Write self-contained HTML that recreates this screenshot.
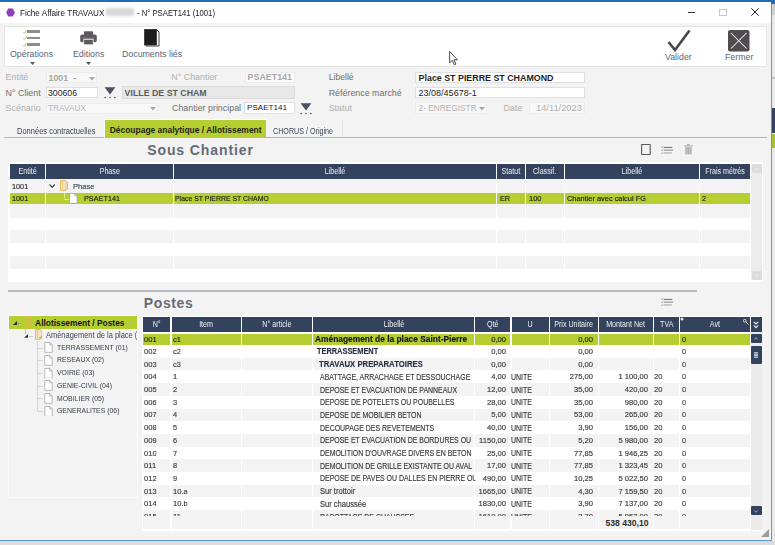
<!DOCTYPE html><html><head><meta charset="utf-8"><style>
*{margin:0;padding:0;box-sizing:border-box}
html,body{width:775px;height:545px;overflow:hidden;background:#dcdcdc;font-family:"Liberation Sans",sans-serif;}
.a{position:absolute;white-space:nowrap}
#win{position:absolute;left:0;top:0;width:772px;height:541px;background:#f3f3f3;overflow:hidden}
.lb{position:absolute;white-space:nowrap;font-size:8.9px;color:#707070;line-height:10px}
.dis{color:#b0b0b0}
.hd{position:absolute;background:#34435d;color:#eef0f4;font-size:8.3px;line-height:15px;text-align:center;white-space:nowrap;overflow:hidden}
.c{position:absolute;font-size:7px;color:#2a2a2a;-webkit-text-stroke:0.16px currentColor;white-space:nowrap;overflow:hidden}
</style></head><body><div id="win"><div class="a" style="left:0px;top:0px;width:772px;height:2px;background:#1f6bb8"></div>
<div class="a" style="left:0px;top:2px;width:771px;height:21px;background:#fff"></div>
<svg class="a" style="left:6px;top:8px" width="9" height="9" viewBox="0 0 9 9"><polygon points="2.2,0.5 6.8,0.5 8.8,4.5 6.8,8.5 2.2,8.5 0.2,4.5" fill="#8e3fc0"/></svg>
<div class="a" style="left:20px;top:7.6px;font-size:8.8px;color:#1a1a1a;line-height:10px;transform:scaleX(0.925);transform-origin:0 0">Fiche Affaire TRAVAUX</div>
<div class="a" style="left:106px;top:8px;width:28px;height:8px;background:#d8d8d8;filter:blur(1.5px)"></div>
<div class="a" style="left:136.5px;top:7.6px;font-size:8.8px;color:#1a1a1a;line-height:10px;transform:scaleX(0.875);transform-origin:0 0">- N° PSAET141 (1001)</div>
<div class="a" style="left:688px;top:12px;width:7px;height:1px;background:#333"></div>
<div class="a" style="left:719px;top:8.5px;width:8px;height:7px;border:1px solid #c8c8c8"></div>
<svg class="a" style="left:751px;top:8px" width="8" height="8" viewBox="0 0 8 8"><path d="M0.3 0.3L7.7 7.7M7.7 0.3L0.3 7.7" stroke="#222" stroke-width="1"/></svg>
<div class="a" style="left:4px;top:26px;width:763px;height:41px;background:#fff;border:1px solid #e6e6e6"></div>
<svg class="a" style="left:22.8px;top:29.7px" width="4" height="4" viewBox="0 0 4 4"><path d="M0.4 2.6L1.3 3.4L3.6 0.4" stroke="#8cc02a" stroke-width="0.9" fill="none"/></svg>
<div class="a" style="left:27px;top:30.2px;width:13px;height:2.6px;background:#8e8e8e"></div>
<svg class="a" style="left:22.8px;top:36.3px" width="4" height="4" viewBox="0 0 4 4"><path d="M0.4 2.6L1.3 3.4L3.6 0.4" stroke="#8cc02a" stroke-width="0.9" fill="none"/></svg>
<div class="a" style="left:27px;top:36.8px;width:13px;height:2.6px;background:#8e8e8e"></div>
<svg class="a" style="left:22.8px;top:42.7px" width="4" height="4" viewBox="0 0 4 4"><path d="M0.4 2.6L1.3 3.4L3.6 0.4" stroke="#8cc02a" stroke-width="0.9" fill="none"/></svg>
<div class="a" style="left:27px;top:43.2px;width:13px;height:2.6px;background:#8e8e8e"></div>
<div class="a" style="left:10px;top:50px;font-size:8.8px;color:#5a6478;line-height:10px;margin-top:-1px">Opérations</div>
<svg class="a" style="left:29.5px;top:61.5px" width="5" height="3" viewBox="0 0 5 3"><path d="M0 0H5L2.5 3Z" fill="#555"/></svg>
<svg class="a" style="left:80px;top:30.5px" width="17" height="14" viewBox="0 0 17 14">
<rect x="4" y="0.3" width="9" height="4" rx="0.8" fill="#5c5a5e"/>
<rect x="0.2" y="3.6" width="16.6" height="7.6" rx="1.8" fill="#5c5a5e"/>
<rect x="2.5" y="6.8" width="12" height="0.8" fill="#9a999c"/>
<rect x="3.8" y="8.6" width="9.4" height="5.2" fill="#5c5a5e" stroke="#fff" stroke-width="0.7"/>
</svg>
<div class="a" style="left:73px;top:50px;font-size:8.8px;color:#5a6478;line-height:10px;margin-top:-1px">Editions</div>
<svg class="a" style="left:86px;top:61.5px" width="5" height="3" viewBox="0 0 5 3"><path d="M0 0H5L2.5 3Z" fill="#555"/></svg>
<svg class="a" style="left:143px;top:29px" width="18" height="18" viewBox="0 0 18 18">
<path d="M3 1H14L16 3V17H3Z" fill="#fff" stroke="#444" stroke-width="1"/>
<rect x="1.5" y="0.5" width="12" height="15.5" fill="#1d1d1d" stroke="#333" stroke-width="0.8"/>
</svg>
<div class="a" style="left:122px;top:50px;font-size:8.8px;color:#5a6478;line-height:10px;margin-top:-1px">Documents liés</div>
<svg class="a" style="left:449px;top:51px" width="9.6" height="14.5" viewBox="0 0 9 14">
<path d="M0.5 0.5V11.5L3 9L5 13.3L6.6 12.6L4.6 8.5H8Z" fill="#fff" stroke="#3a3a44" stroke-width="0.9"/></svg>
<svg class="a" style="left:667px;top:29px" width="24" height="23" viewBox="0 0 24 23"><path d="M1.5 13L8 21L22.5 1.5" stroke="#4a474c" stroke-width="2.6" fill="none"/></svg>
<div class="a" style="left:665px;top:52px;font-size:8.8px;color:#5a6478;line-height:10px">Valider</div>
<svg class="a" style="left:728.3px;top:30px" width="22" height="22" viewBox="0 0 22 22">
<rect x="0" y="0" width="21.5" height="21.5" rx="2" fill="#524c50"/>
<path d="M3 3L18.5 18.5M18.5 3L3 18.5" stroke="#eeeeee" stroke-width="1.05"/></svg>
<div class="a" style="left:725px;top:52px;font-size:8.8px;color:#5a6478;line-height:10px">Fermer</div>
<div class="lb dis" style="left:5.6px;top:72.4px;font-size:8.9px">Entité</div>
<div class="a" style="left:46px;top:72px;width:51px;height:11px;background:#f8f8f8;border:1px solid #ececec"></div>
<div class="a" style="left:48.5px;top:72.6px;line-height:10px;font-size:8.9px;font-weight:bold;color:#a6a6a6">1001&nbsp; -</div>
<svg class="a" style="left:89px;top:76.5px" width="6" height="4" viewBox="0 0 6 4"><path d="M0 0H6L3 3.5Z" fill="#a8a8a8"/></svg>
<div class="lb" style="left:5.6px;top:87.5px;font-size:8.9px">N° Client</div>
<div class="a" style="left:45.5px;top:86.7px;width:52.0px;height:11.799999999999997px;background:#fff;border:1px solid #e0e0e0"></div>
<div class="a" style="left:48px;top:87.7px;line-height:10px;font-size:8.7px;color:#222">300606</div>
<svg class="a" style="left:103.6px;top:86.7px" width="13" height="12" viewBox="0 0 13 12">
<path d="M0.6 0.3H11.4L6 7.6Z" fill="#4b5167"/>
<circle cx="1.2" cy="10.6" r="0.75" fill="#3e4556"/><circle cx="6" cy="10.6" r="0.75" fill="#3e4556"/><circle cx="10.8" cy="10.6" r="0.75" fill="#3e4556"/></svg>
<div class="a" style="left:121.5px;top:86.3px;width:173.5px;height:12.400000000000006px;background:#e8e8e8;border:1px solid #dcdcdc"></div>
<div class="a" style="left:124.6px;top:87.6px;line-height:10px;font-size:8.8px;font-weight:bold;color:#5c5c5c">VILLE DE ST CHAM</div>
<div class="lb dis" style="left:5.6px;top:103px;font-size:8.9px">Scénario</div>
<div class="a" style="left:45.5px;top:103px;width:112.5px;height:10.5px;background:#f8f8f8;border:1px solid #ececec"></div>
<div class="a" style="left:48px;top:103.2px;line-height:10px;font-size:8.3px;color:#b4b4b4">TRAVAUX</div>
<svg class="a" style="left:150px;top:107px" width="6" height="4" viewBox="0 0 6 4"><path d="M0 0H6L3 3.5Z" fill="#a8a8a8"/></svg>
<div class="lb dis" style="left:171.3px;top:72px;font-size:8.9px">N° Chantier</div>
<div class="a" style="left:244.7px;top:71.6px;width:50.30000000000001px;height:11.400000000000006px;background:#fafafa;border:1px solid #ececec"></div>
<div class="a" style="left:247.6px;top:72.3px;line-height:10px;font-size:8.9px;font-weight:bold;color:#a8a8a8">PSAET141</div>
<div class="lb" style="left:172px;top:102.8px;font-size:8.9px">Chantier principal</div>
<div class="a" style="left:244.3px;top:102.3px;width:50.69999999999999px;height:12.0px;background:#fff;border:1px solid #e0e0e0"></div>
<div class="a" style="left:247px;top:103.3px;line-height:10px;font-size:8.1px;color:#222">PSAET141</div>
<svg class="a" style="left:300.3px;top:102.6px" width="13" height="12" viewBox="0 0 13 12">
<path d="M0.6 0.3H11.4L6 7.6Z" fill="#4b5167"/>
<circle cx="1.2" cy="10.6" r="0.75" fill="#3e4556"/><circle cx="6" cy="10.6" r="0.75" fill="#3e4556"/><circle cx="10.8" cy="10.6" r="0.75" fill="#3e4556"/></svg>
<div class="lb" style="left:328.7px;top:72.3px;font-size:8.65px">Libellé</div>
<div class="a" style="left:415.4px;top:71.9px;width:169.20000000000005px;height:11.5px;background:#fff;border:1px solid #e0e0e0"></div>
<div class="a" style="left:418.6px;top:72.7px;line-height:10px;font-size:8.87px;font-weight:bold;color:#1e1e1e">Place ST PIERRE ST CHAMOND</div>
<div class="lb" style="left:328.7px;top:87.6px;font-size:8.9px">Référence marché</div>
<div class="a" style="left:415.4px;top:86.7px;width:169.20000000000005px;height:11.700000000000003px;background:#fff;border:1px solid #e0e0e0"></div>
<div class="a" style="left:418.6px;top:87.8px;line-height:10px;font-size:9px;color:#222">23/08/45678-1</div>
<div class="lb dis" style="left:328.7px;top:103px;font-size:8.9px">Statut</div>
<div class="a" style="left:415.4px;top:102.4px;width:71.30000000000001px;height:11.699999999999989px;background:#f8f8f8;border:1px solid #ececec"></div>
<div class="a" style="left:418.6px;top:103.3px;line-height:10px;font-size:8.3px;color:#b0b0b0">2- ENREGISTR</div>
<svg class="a" style="left:478.5px;top:107px" width="6" height="4" viewBox="0 0 6 4"><path d="M0 0H6L3 3.5Z" fill="#a8a8a8"/></svg>
<div class="lb dis" style="left:503.4px;top:103px;font-size:8.9px">Date</div>
<div class="a" style="left:528.6px;top:102.4px;width:56.0px;height:11.699999999999989px;background:#f8f8f8;border:1px solid #ececec"></div>
<div class="a" style="left:536px;top:103.3px;line-height:10px;font-size:9.3px;color:#b0b0b0">14/11/2023</div>
<div class="a" style="left:4px;top:136.8px;width:100.5px;height:1.3px;background:#b6ce32"></div>
<div class="a" style="left:16.5px;top:125.8px;font-size:8.3px;color:#3c4458;line-height:10px;transform:scaleX(0.905);transform-origin:0 0">Données contractuelles</div>
<div class="a" style="left:104px;top:119px;width:161.5px;height:18.5px;background:#fff"></div>
<div class="a" style="left:105px;top:120px;width:160.5px;height:17.5px;background:#b6ce32"></div>
<div class="a" style="left:109.7px;top:124.5px;font-size:8.46px;font-weight:bold;color:#1d2418;line-height:10px">Découpage analytique / Allotissement</div>
<div class="a" style="left:265.5px;top:136.8px;width:501.5px;height:1.3px;background:#b6ce32"></div>
<div class="a" style="left:273px;top:125.8px;font-size:8.3px;color:#3c4458;line-height:10px;transform:scaleX(0.862);transform-origin:0 0">CHORUS / Origine</div>
<div class="a" style="left:342px;top:120px;width:1px;height:16px;background:#e4e4e4"></div>
<div class="a" style="left:147.2px;top:141.6px;font-size:14px;font-weight:bold;color:#676a75;line-height:16px;letter-spacing:0.9px">Sous Chantier</div>
<svg class="a" style="left:641px;top:144px" width="10" height="11" viewBox="0 0 10 11"><rect x="0.6" y="0.5" width="8.6" height="10" rx="0.6" fill="none" stroke="#5a5a5e" stroke-width="1.1"/></svg>
<svg class="a" style="left:661px;top:145.6px" width="12" height="8" viewBox="0 0 12 8">
<path d="M0.3 1.2L0.9 1.8L1.8 0.4M0.3 4.2L0.9 4.8L1.8 3.4M0.3 7.2L0.9 7.8L1.8 6.4" stroke="#6a6a6a" stroke-width="0.6" fill="none"/>
<rect x="2.8" y="0.9" width="8.5" height="1" fill="#6a6a6a"/><rect x="2.8" y="3.6" width="9.2" height="1" fill="#8a8a8a"/><rect x="2.8" y="6.5" width="8" height="0.9" fill="#9a9a9a"/></svg>
<svg class="a" style="left:683.5px;top:144px" width="9" height="11" viewBox="0 0 9 11">
<rect x="0" y="1.3" width="9" height="1.2" fill="#b5b5b5"/><rect x="3" y="0" width="3" height="1.5" fill="#b5b5b5"/>
<path d="M1 3H8V10.5H1Z" fill="#c4c4c4"/><path d="M3 4V9.5M4.5 4V9.5M6 4V9.5" stroke="#9e9e9e" stroke-width="0.5"/></svg>
<div class="a" style="left:8px;top:162px;width:755px;height:119.5px;background:#fff"></div>
<div class="hd" style="left:10px;top:163.8px;width:35.2px;height:15px"><span style="display:inline-block;transform:scaleX(0.86)">Entité</span></div>
<div class="hd" style="left:46px;top:163.8px;width:127.2px;height:15px"><span style="display:inline-block;transform:scaleX(0.86)">Phase</span></div>
<div class="hd" style="left:174px;top:163.8px;width:322.2px;height:15px"><span style="display:inline-block;transform:scaleX(0.86)">Libellé</span></div>
<div class="hd" style="left:497px;top:163.8px;width:28.2px;height:15px"><span style="display:inline-block;transform:scaleX(0.86)">Statut</span></div>
<div class="hd" style="left:526px;top:163.8px;width:38.2px;height:15px"><span style="display:inline-block;transform:scaleX(0.86)">Classif.</span></div>
<div class="hd" style="left:565px;top:163.8px;width:134.2px;height:15px"><span style="display:inline-block;transform:scaleX(0.86)">Libellé</span></div>
<div class="hd" style="left:700px;top:163.8px;width:50.2px;height:15px"><span style="display:inline-block;transform:scaleX(0.86)">Frais métrés</span></div>
<div class="a" style="left:10px;top:178.8px;width:35.2px;height:13.9px;background:#f3f3f3"></div>
<div class="a" style="left:46px;top:178.8px;width:127.2px;height:13.9px;background:#f3f3f3"></div>
<div class="a" style="left:174px;top:178.8px;width:322.2px;height:13.9px;background:#f3f3f3"></div>
<div class="a" style="left:497px;top:178.8px;width:28.2px;height:13.9px;background:#f3f3f3"></div>
<div class="a" style="left:526px;top:178.8px;width:38.2px;height:13.9px;background:#f3f3f3"></div>
<div class="a" style="left:565px;top:178.8px;width:134.2px;height:13.9px;background:#f3f3f3"></div>
<div class="a" style="left:700px;top:178.8px;width:50.2px;height:13.9px;background:#f3f3f3"></div>
<div class="a" style="left:10px;top:192.7px;width:35.2px;height:11.7px;background:#b6ce32"></div>
<div class="a" style="left:46px;top:192.7px;width:127.2px;height:11.7px;background:#b6ce32"></div>
<div class="a" style="left:174px;top:192.7px;width:322.2px;height:11.7px;background:#b6ce32"></div>
<div class="a" style="left:497px;top:192.7px;width:28.2px;height:11.7px;background:#b6ce32"></div>
<div class="a" style="left:526px;top:192.7px;width:38.2px;height:11.7px;background:#b6ce32"></div>
<div class="a" style="left:565px;top:192.7px;width:134.2px;height:11.7px;background:#b6ce32"></div>
<div class="a" style="left:700px;top:192.7px;width:50.2px;height:11.7px;background:#b6ce32"></div>
<div class="a" style="left:10px;top:204.4px;width:35.2px;height:13.2px;background:#f3f3f3"></div>
<div class="a" style="left:46px;top:204.4px;width:127.2px;height:13.2px;background:#f3f3f3"></div>
<div class="a" style="left:174px;top:204.4px;width:322.2px;height:13.2px;background:#f3f3f3"></div>
<div class="a" style="left:497px;top:204.4px;width:28.2px;height:13.2px;background:#f3f3f3"></div>
<div class="a" style="left:526px;top:204.4px;width:38.2px;height:13.2px;background:#f3f3f3"></div>
<div class="a" style="left:565px;top:204.4px;width:134.2px;height:13.2px;background:#f3f3f3"></div>
<div class="a" style="left:700px;top:204.4px;width:50.2px;height:13.2px;background:#f3f3f3"></div>
<div class="a" style="left:10px;top:230.2px;width:35.2px;height:12.8px;background:#f3f3f3"></div>
<div class="a" style="left:46px;top:230.2px;width:127.2px;height:12.8px;background:#f3f3f3"></div>
<div class="a" style="left:174px;top:230.2px;width:322.2px;height:12.8px;background:#f3f3f3"></div>
<div class="a" style="left:497px;top:230.2px;width:28.2px;height:12.8px;background:#f3f3f3"></div>
<div class="a" style="left:526px;top:230.2px;width:38.2px;height:12.8px;background:#f3f3f3"></div>
<div class="a" style="left:565px;top:230.2px;width:134.2px;height:12.8px;background:#f3f3f3"></div>
<div class="a" style="left:700px;top:230.2px;width:50.2px;height:12.8px;background:#f3f3f3"></div>
<div class="a" style="left:10px;top:255.8px;width:35.2px;height:12.8px;background:#f3f3f3"></div>
<div class="a" style="left:46px;top:255.8px;width:127.2px;height:12.8px;background:#f3f3f3"></div>
<div class="a" style="left:174px;top:255.8px;width:322.2px;height:12.8px;background:#f3f3f3"></div>
<div class="a" style="left:497px;top:255.8px;width:28.2px;height:12.8px;background:#f3f3f3"></div>
<div class="a" style="left:526px;top:255.8px;width:38.2px;height:12.8px;background:#f3f3f3"></div>
<div class="a" style="left:565px;top:255.8px;width:134.2px;height:12.8px;background:#f3f3f3"></div>
<div class="a" style="left:700px;top:255.8px;width:50.2px;height:12.8px;background:#f3f3f3"></div>
<div class="c" style="left:11.7px;top:180.79999999999998px;line-height:12px;font-size:7.9px;transform:scaleX(0.924);transform-origin:0 50%;">1001</div>
<svg class="a" style="left:48.8px;top:183.6px" width="6.4" height="4" viewBox="0 0 6.4 4"><path d="M0.5 0.5L3.2 3.3L5.9 0.5" stroke="#3a3a3a" stroke-width="1.1" fill="none"/></svg>
<svg class="a" style="left:59.7px;top:180.3px" width="8" height="10.8" viewBox="0 0 8 10.8">
<path d="M0.6 0.6H5.5L7.4 2.2V9.2H5.8V10.3H0.6Z" fill="#f3e4cc" stroke="#e6b43c" stroke-width="0.9"/>
<path d="M2.6 1.5V9.4M5.8 2.5V9.2" stroke="#e0ba60" stroke-width="0.6" fill="none"/></svg>
<div class="c" style="left:72.7px;top:180.79999999999998px;line-height:12px;font-size:7.9px;transform:scaleX(0.962);transform-origin:0 50%;color:#3c4458">Phase</div>
<div class="a" style="left:63.8px;top:192.7px;width:0.7px;height:5.5px;background:#dfe9a8"></div>
<div class="a" style="left:63.8px;top:198.6px;width:5px;height:0.7px;background:#dfe9a8"></div>
<svg class="a" style="left:69px;top:193px" width="8.8" height="11" viewBox="0 0 8.5 11">
<path d="M0.5 0.5H5.5L8 3V10.5H0.5Z" fill="#fff" stroke="#9a9a9a" stroke-width="0.7"/><path d="M5.5 0.5V3H8" fill="none" stroke="#9a9a9a" stroke-width="0.6"/></svg>
<div class="c" style="left:11.7px;top:193.1px;line-height:12px;font-size:7.9px;transform:scaleX(0.924);transform-origin:0 50%;color:#1e1e1e">1001</div>
<div class="c" style="left:83.7px;top:193.1px;line-height:12px;font-size:7.9px;transform:scaleX(0.924);transform-origin:0 50%;color:#1e1e1e">PSAET141</div>
<div class="c" style="left:175.1px;top:193.1px;line-height:12px;font-size:7.9px;transform:scaleX(0.876);transform-origin:0 50%;color:#1e1e1e">Place ST PIERRE ST CHAMO</div>
<div class="c" style="left:499.5px;top:193.1px;line-height:12px;font-size:7.9px;transform:scaleX(0.924);transform-origin:0 50%;color:#1e1e1e">ER</div>
<div class="c" style="left:528.5px;top:193.1px;line-height:12px;font-size:7.9px;transform:scaleX(0.949);transform-origin:0 50%;color:#1e1e1e">100</div>
<div class="c" style="left:566.8px;top:193.1px;line-height:12px;font-size:7.9px;transform:scaleX(0.937);transform-origin:0 50%;color:#1e1e1e">Chantier avec calcul FG</div>
<div class="c" style="left:702px;top:193.1px;line-height:12px;font-size:7.9px;transform:scaleX(0.949);transform-origin:0 50%;color:#1e1e1e">2</div>
<div class="a" style="left:751px;top:163.5px;width:11px;height:116.5px;background:#ececec"></div>
<div class="a" style="left:751.5px;top:163.6px;width:10px;height:9.8px;background:#dcdcdc;border-radius:1.5px"></div>
<div class="a" style="left:751.5px;top:270.5px;width:10px;height:9.3px;background:#dcdcdc;border-radius:1.5px"></div>
<svg class="a" style="left:754.5px;top:166.8px" width="4" height="3" viewBox="0 0 4 3"><path d="M0.3 2.5L2 0.7L3.7 2.5" stroke="#f4f4f4" stroke-width="0.7" fill="none"/></svg>
<svg class="a" style="left:754.5px;top:274px" width="4" height="3" viewBox="0 0 4 3"><path d="M0.3 0.5L2 2.3L3.7 0.5" stroke="#f4f4f4" stroke-width="0.7" fill="none"/></svg>
<div class="a" style="left:8px;top:290px;width:688.5px;height:2px;background:#b9bcc2"></div>
<div class="a" style="left:143.8px;top:295px;font-size:14px;font-weight:bold;color:#676a75;line-height:16px;letter-spacing:0.6px">Postes</div>
<svg class="a" style="left:661px;top:298px" width="12" height="8" viewBox="0 0 12 8">
<path d="M0.3 1.2L0.9 1.8L1.8 0.4M0.3 4.2L0.9 4.8L1.8 3.4M0.3 7.2L0.9 7.8L1.8 6.4" stroke="#6a6a6a" stroke-width="0.6" fill="none"/>
<rect x="2.8" y="0.9" width="8.5" height="1" fill="#6a6a6a"/><rect x="2.8" y="3.6" width="9.2" height="1" fill="#8a8a8a"/><rect x="2.8" y="6.5" width="8" height="0.9" fill="#9a9a9a"/></svg>
<div class="a" style="left:8px;top:315px;width:130px;height:183px;background:#f3f3f3;border:1.5px solid #fbfbfb"></div>
<div class="a" style="left:9px;top:316px;width:128px;height:12.5px;background:#b6ce32"></div>
<svg class="a" style="left:12.8px;top:321px" width="4" height="4" viewBox="0 0 4 4"><path d="M4 0V4H0Z" fill="#2a2a3a"/></svg>
<div class="a" style="left:17px;top:322.8px;width:4px;height:0.6px;background:#9aaa50"></div>
<svg class="a" style="left:23px;top:316.3px" width="8" height="11.5" viewBox="0 0 8 11.5">
<path d="M0.5 1.5L3 0.4H7.5V10.5H0.5Z" fill="none" stroke="#e3b650" stroke-width="0.9"/>
<path d="M2.5 3V9.5" stroke="#e3b650" stroke-width="0.7"/></svg>
<div class="a" style="left:35.1px;top:317.6px;font-size:8.4px;font-weight:bold;color:#141414;line-height:10px">Allotissement / Postes</div>
<div class="a" style="left:25.3px;top:328.5px;width:0.7px;height:5.5px;background:#b8b8b8"></div>
<svg class="a" style="left:24px;top:333.8px" width="4.2" height="3.8" viewBox="0 0 4 4"><path d="M4 0V4H0Z" fill="#2a2a3a"/></svg>
<div class="a" style="left:28.5px;top:335.5px;width:4.5px;height:0.6px;background:#c8c8c8"></div>
<svg class="a" style="left:34.7px;top:329px" width="7.5" height="11" viewBox="0 0 7.5 11">
<path d="M0.6 0.6H5L6.9 2.2V9.2H5.4V10.3H0.6Z" fill="#f3e4cc" stroke="#e6b43c" stroke-width="0.9"/><path d="M2.4 1.5V9.4" stroke="#e0ba60" stroke-width="0.6"/><path d="M4.3 8L5.3 9L7.2 6.6" stroke="#7cb82a" stroke-width="0.9" fill="none"/></svg>
<div class="a" style="left:46.4px;top:330.2px;width:90.6px;height:11px;overflow:hidden"><div class="a" style="left:0;top:0;font-size:8.3px;color:#3c4458;line-height:10px;transform:scaleX(0.9);transform-origin:0 0">Aménagement de la place (</div></div>
<div class="a" style="left:37px;top:340.5px;width:0.7px;height:70px;background:#d4d4d4"></div>
<div class="a" style="left:37.8px;top:347.6px;width:5px;height:0.6px;background:#d4d4d4"></div>
<svg class="a" style="left:44px;top:342.20000000000005px" width="9" height="10.8" viewBox="0 0 8.5 11">
<path d="M0.5 0.5H5.5L8 3V10.5H0.5Z" fill="#fff" stroke="#9a9a9a" stroke-width="0.7"/><path d="M5.5 0.5V3H8" fill="none" stroke="#9a9a9a" stroke-width="0.6"/></svg>
<div class="a" style="left:56.9px;top:342.8px;font-size:7.8px;color:#353a48;line-height:10px;transform:scaleX(0.885);transform-origin:0 0">TERRASSEMENT (01)</div>
<div class="a" style="left:37.8px;top:360.28000000000003px;width:5px;height:0.6px;background:#d4d4d4"></div>
<svg class="a" style="left:44px;top:354.88000000000005px" width="9" height="10.8" viewBox="0 0 8.5 11">
<path d="M0.5 0.5H5.5L8 3V10.5H0.5Z" fill="#fff" stroke="#9a9a9a" stroke-width="0.7"/><path d="M5.5 0.5V3H8" fill="none" stroke="#9a9a9a" stroke-width="0.6"/></svg>
<div class="a" style="left:56.9px;top:355.48px;font-size:7.8px;color:#353a48;line-height:10px;transform:scaleX(0.885);transform-origin:0 0">RESEAUX (02)</div>
<div class="a" style="left:37.8px;top:372.96000000000004px;width:5px;height:0.6px;background:#d4d4d4"></div>
<svg class="a" style="left:44px;top:367.56000000000006px" width="9" height="10.8" viewBox="0 0 8.5 11">
<path d="M0.5 0.5H5.5L8 3V10.5H0.5Z" fill="#fff" stroke="#9a9a9a" stroke-width="0.7"/><path d="M5.5 0.5V3H8" fill="none" stroke="#9a9a9a" stroke-width="0.6"/></svg>
<div class="a" style="left:56.9px;top:368.16px;font-size:7.8px;color:#353a48;line-height:10px;transform:scaleX(0.885);transform-origin:0 0">VOIRIE (03)</div>
<div class="a" style="left:37.8px;top:385.64000000000004px;width:5px;height:0.6px;background:#d4d4d4"></div>
<svg class="a" style="left:44px;top:380.24000000000007px" width="9" height="10.8" viewBox="0 0 8.5 11">
<path d="M0.5 0.5H5.5L8 3V10.5H0.5Z" fill="#fff" stroke="#9a9a9a" stroke-width="0.7"/><path d="M5.5 0.5V3H8" fill="none" stroke="#9a9a9a" stroke-width="0.6"/></svg>
<div class="a" style="left:56.9px;top:380.84000000000003px;font-size:7.8px;color:#353a48;line-height:10px;transform:scaleX(0.885);transform-origin:0 0">GENIE-CIVIL (04)</div>
<div class="a" style="left:37.8px;top:398.32000000000005px;width:5px;height:0.6px;background:#d4d4d4"></div>
<svg class="a" style="left:44px;top:392.9200000000001px" width="9" height="10.8" viewBox="0 0 8.5 11">
<path d="M0.5 0.5H5.5L8 3V10.5H0.5Z" fill="#fff" stroke="#9a9a9a" stroke-width="0.7"/><path d="M5.5 0.5V3H8" fill="none" stroke="#9a9a9a" stroke-width="0.6"/></svg>
<div class="a" style="left:56.9px;top:393.52000000000004px;font-size:7.8px;color:#353a48;line-height:10px;transform:scaleX(0.885);transform-origin:0 0">MOBILIER (05)</div>
<div class="a" style="left:37.8px;top:411.0px;width:5px;height:0.6px;background:#d4d4d4"></div>
<svg class="a" style="left:44px;top:405.6px" width="9" height="10.8" viewBox="0 0 8.5 11">
<path d="M0.5 0.5H5.5L8 3V10.5H0.5Z" fill="#fff" stroke="#9a9a9a" stroke-width="0.7"/><path d="M5.5 0.5V3H8" fill="none" stroke="#9a9a9a" stroke-width="0.6"/></svg>
<div class="a" style="left:56.9px;top:406.2px;font-size:7.8px;color:#353a48;line-height:10px;transform:scaleX(0.885);transform-origin:0 0">GENERALITES (06)</div>
<div class="a" style="left:142px;top:315.5px;width:620px;height:215px;background:#fff"></div>
<div class="hd" style="left:143px;top:316.9px;width:27.3px;height:15.1px;line-height:15px"><span style="display:inline-block;transform:scaleX(0.86)">N°</span></div>
<div class="hd" style="left:171.8px;top:316.9px;width:68.8px;height:15.1px;line-height:15px"><span style="display:inline-block;transform:scaleX(0.86)">Item</span></div>
<div class="hd" style="left:242px;top:316.9px;width:70.2px;height:15.1px;line-height:15px"><span style="display:inline-block;transform:scaleX(0.86)">N° article</span></div>
<div class="hd" style="left:313.4px;top:316.9px;width:160.6px;height:15.1px;line-height:15px"><span style="display:inline-block;transform:scaleX(0.86)">Libellé</span></div>
<div class="hd" style="left:475.2px;top:316.9px;width:35.1px;height:15.1px;line-height:15px"><span style="display:inline-block;transform:scaleX(0.86)">Qté</span></div>
<div class="hd" style="left:511.5px;top:316.9px;width:37.5px;height:15.1px;line-height:15px"><span style="display:inline-block;transform:scaleX(0.86)">U</span></div>
<div class="hd" style="left:550.2px;top:316.9px;width:47.8px;height:15.1px;line-height:15px"><span style="display:inline-block;transform:scaleX(0.86)">Prix Unitaire</span></div>
<div class="hd" style="left:599.2px;top:316.9px;width:53.6px;height:15.1px;line-height:15px"><span style="display:inline-block;transform:scaleX(0.86)">Montant Net</span></div>
<div class="hd" style="left:654px;top:316.9px;width:24.6px;height:15.1px;line-height:15px"><span style="display:inline-block;transform:scaleX(0.86)">TVA</span></div>
<div class="hd" style="left:679.8px;top:316.9px;width:70.2px;height:15.1px;line-height:15px"><span style="display:inline-block;transform:scaleX(0.86)">Avt</span></div>
<svg class="a" style="left:680px;top:317px" width="4" height="4" viewBox="0 0 4 4"><circle cx="2" cy="2" r="1.5" fill="#e8e8e8"/></svg>
<svg class="a" style="left:743px;top:319px" width="6" height="6" viewBox="0 0 6 6"><circle cx="1.8" cy="1.8" r="1.4" fill="none" stroke="#e0e0e0" stroke-width="0.9"/><path d="M2.8 2.8L5.6 5.6" stroke="#e0e0e0" stroke-width="1"/></svg>
<div class="a" style="left:142px;top:333px;width:610px;height:183px;overflow:hidden">
<div class="a" style="left:1px;top:0.5px;width:27.3px;height:11.5px;background:#b6ce32"></div>
<div class="a" style="left:29.8px;top:0.5px;width:68.8px;height:11.5px;background:#b6ce32"></div>
<div class="a" style="left:100px;top:0.5px;width:70.2px;height:11.5px;background:#b6ce32"></div>
<div class="a" style="left:171.4px;top:0.5px;width:160.6px;height:11.5px;background:#b6ce32"></div>
<div class="a" style="left:333.2px;top:0.5px;width:35.1px;height:11.5px;background:#b6ce32"></div>
<div class="a" style="left:369.5px;top:0.5px;width:37.5px;height:11.5px;background:#b6ce32"></div>
<div class="a" style="left:408.2px;top:0.5px;width:47.8px;height:11.5px;background:#b6ce32"></div>
<div class="a" style="left:457.2px;top:0.5px;width:53.6px;height:11.5px;background:#b6ce32"></div>
<div class="a" style="left:512px;top:0.5px;width:24.6px;height:11.5px;background:#b6ce32"></div>
<div class="a" style="left:537.8px;top:0.5px;width:70.2px;height:11.5px;background:#b6ce32"></div>
<div class="c" style="left:2.2px;top:0.85px;line-height:12px;color:#1a1a1a;font-size:7.9px;transform:scaleX(0.962);transform-origin:0 50%;">001</div>
<div class="c" style="left:31.4px;top:0.85px;line-height:12px;color:#1a1a1a;font-size:7.9px;transform:scaleX(0.962);transform-origin:0 50%;">c1</div>
<div class="c" style="left:172.7px;top:0.05px;line-height:12px;color:#1a1a1a;font-size:8.9px;transform:scaleX(0.944);transform-origin:0 50%;font-weight:bold;width:190px;color:#151515">Aménagement de la place Saint-Pierre</div>
<div class="c" style="left:263.5px;width:100px;text-align:right;top:0.85px;line-height:12px;color:#1a1a1a;font-size:7.9px;transform:scaleX(0.962);transform-origin:100% 50%;">0,00</div>
<div class="c" style="left:369.2px;top:0.37px;line-height:12px;color:#1a1a1a;font-size:8.5px;transform:scaleX(0.824);transform-origin:0 50%;"></div>
<div class="c" style="left:351.2px;width:100px;text-align:right;top:0.85px;line-height:12px;color:#1a1a1a;font-size:7.9px;transform:scaleX(0.962);transform-origin:100% 50%;">0,00</div>
<div class="c" style="left:406.3px;width:100px;text-align:right;top:0.85px;line-height:12px;color:#1a1a1a;font-size:7.9px;transform:scaleX(0.962);transform-origin:100% 50%;"></div>
<div class="c" style="left:512.3px;top:0.85px;line-height:12px;color:#1a1a1a;font-size:7.9px;transform:scaleX(0.962);transform-origin:0 50%;"></div>
<div class="c" style="left:539.8px;top:0.85px;line-height:12px;color:#1a1a1a;font-size:7.9px;transform:scaleX(0.962);transform-origin:0 50%;">0</div>
<div class="c" style="left:2.2px;top:12.95px;line-height:12px;color:#3a3a3a;font-size:7.9px;transform:scaleX(0.962);transform-origin:0 50%;">002</div>
<div class="c" style="left:31.4px;top:12.95px;line-height:12px;color:#3a3a3a;font-size:7.9px;transform:scaleX(0.962);transform-origin:0 50%;">c2</div>
<div class="c" style="left:174.8px;top:12.39px;line-height:12px;color:#3a3a3a;font-size:8.6px;transform:scaleX(0.86);transform-origin:0 50%;font-weight:bold;color:#283044">TERRASSEMENT</div>
<div class="c" style="left:263.5px;width:100px;text-align:right;top:12.95px;line-height:12px;color:#3a3a3a;font-size:7.9px;transform:scaleX(0.962);transform-origin:100% 50%;">0,00</div>
<div class="c" style="left:369.2px;top:12.47px;line-height:12px;color:#3a3a3a;font-size:8.5px;transform:scaleX(0.824);transform-origin:0 50%;"></div>
<div class="c" style="left:351.2px;width:100px;text-align:right;top:12.95px;line-height:12px;color:#3a3a3a;font-size:7.9px;transform:scaleX(0.962);transform-origin:100% 50%;">0,00</div>
<div class="c" style="left:406.3px;width:100px;text-align:right;top:12.95px;line-height:12px;color:#3a3a3a;font-size:7.9px;transform:scaleX(0.962);transform-origin:100% 50%;"></div>
<div class="c" style="left:512.3px;top:12.95px;line-height:12px;color:#3a3a3a;font-size:7.9px;transform:scaleX(0.962);transform-origin:0 50%;"></div>
<div class="c" style="left:539.8px;top:12.95px;line-height:12px;color:#3a3a3a;font-size:7.9px;transform:scaleX(0.962);transform-origin:0 50%;">0</div>
<div class="a" style="left:1px;top:24.7px;width:27.3px;height:12.7px;background:#f3f3f3"></div>
<div class="a" style="left:29.8px;top:24.7px;width:68.8px;height:12.7px;background:#f3f3f3"></div>
<div class="a" style="left:100px;top:24.7px;width:70.2px;height:12.7px;background:#f3f3f3"></div>
<div class="a" style="left:171.4px;top:24.7px;width:160.6px;height:12.7px;background:#f3f3f3"></div>
<div class="a" style="left:333.2px;top:24.7px;width:35.1px;height:12.7px;background:#f3f3f3"></div>
<div class="a" style="left:369.5px;top:24.7px;width:37.5px;height:12.7px;background:#f3f3f3"></div>
<div class="a" style="left:408.2px;top:24.7px;width:47.8px;height:12.7px;background:#f3f3f3"></div>
<div class="a" style="left:457.2px;top:24.7px;width:53.6px;height:12.7px;background:#f3f3f3"></div>
<div class="a" style="left:512px;top:24.7px;width:24.6px;height:12.7px;background:#f3f3f3"></div>
<div class="a" style="left:537.8px;top:24.7px;width:70.2px;height:12.7px;background:#f3f3f3"></div>
<div class="c" style="left:2.2px;top:25.65px;line-height:12px;color:#3a3a3a;font-size:7.9px;transform:scaleX(0.962);transform-origin:0 50%;">003</div>
<div class="c" style="left:31.4px;top:25.65px;line-height:12px;color:#3a3a3a;font-size:7.9px;transform:scaleX(0.962);transform-origin:0 50%;">c3</div>
<div class="c" style="left:177.2px;top:25.09px;line-height:12px;color:#3a3a3a;font-size:8.6px;transform:scaleX(0.901);transform-origin:0 50%;font-weight:bold;color:#283044">TRAVAUX PREPARATOIRES</div>
<div class="c" style="left:263.5px;width:100px;text-align:right;top:25.65px;line-height:12px;color:#3a3a3a;font-size:7.9px;transform:scaleX(0.962);transform-origin:100% 50%;">0,00</div>
<div class="c" style="left:369.2px;top:25.17px;line-height:12px;color:#3a3a3a;font-size:8.5px;transform:scaleX(0.824);transform-origin:0 50%;"></div>
<div class="c" style="left:351.2px;width:100px;text-align:right;top:25.65px;line-height:12px;color:#3a3a3a;font-size:7.9px;transform:scaleX(0.962);transform-origin:100% 50%;">0,00</div>
<div class="c" style="left:406.3px;width:100px;text-align:right;top:25.65px;line-height:12px;color:#3a3a3a;font-size:7.9px;transform:scaleX(0.962);transform-origin:100% 50%;"></div>
<div class="c" style="left:512.3px;top:25.65px;line-height:12px;color:#3a3a3a;font-size:7.9px;transform:scaleX(0.962);transform-origin:0 50%;"></div>
<div class="c" style="left:539.8px;top:25.65px;line-height:12px;color:#3a3a3a;font-size:7.9px;transform:scaleX(0.962);transform-origin:0 50%;">0</div>
<div class="c" style="left:2.2px;top:38.35px;line-height:12px;color:#3a3a3a;font-size:7.9px;transform:scaleX(0.962);transform-origin:0 50%;">004</div>
<div class="c" style="left:31.4px;top:38.35px;line-height:12px;color:#3a3a3a;font-size:7.9px;transform:scaleX(0.962);transform-origin:0 50%;">1</div>
<div class="c" style="left:178.2px;top:37.87px;line-height:12px;color:#3a3a3a;font-size:8.5px;transform:scaleX(0.818);transform-origin:0 50%;width:190px">ABATTAGE, ARRACHAGE ET DESSOUCHAGE</div>
<div class="c" style="left:263.5px;width:100px;text-align:right;top:38.35px;line-height:12px;color:#3a3a3a;font-size:7.9px;transform:scaleX(0.962);transform-origin:100% 50%;">4,00</div>
<div class="c" style="left:369.2px;top:37.87px;line-height:12px;color:#3a3a3a;font-size:8.5px;transform:scaleX(0.824);transform-origin:0 50%;">UNITE</div>
<div class="c" style="left:351.2px;width:100px;text-align:right;top:38.35px;line-height:12px;color:#3a3a3a;font-size:7.9px;transform:scaleX(0.962);transform-origin:100% 50%;">275,00</div>
<div class="c" style="left:406.3px;width:100px;text-align:right;top:38.35px;line-height:12px;color:#3a3a3a;font-size:7.9px;transform:scaleX(0.962);transform-origin:100% 50%;">1 100,00</div>
<div class="c" style="left:512.3px;top:38.35px;line-height:12px;color:#3a3a3a;font-size:7.9px;transform:scaleX(0.962);transform-origin:0 50%;">20</div>
<div class="c" style="left:539.8px;top:38.35px;line-height:12px;color:#3a3a3a;font-size:7.9px;transform:scaleX(0.962);transform-origin:0 50%;">0</div>
<div class="a" style="left:1px;top:50.1px;width:27.3px;height:12.7px;background:#f3f3f3"></div>
<div class="a" style="left:29.8px;top:50.1px;width:68.8px;height:12.7px;background:#f3f3f3"></div>
<div class="a" style="left:100px;top:50.1px;width:70.2px;height:12.7px;background:#f3f3f3"></div>
<div class="a" style="left:171.4px;top:50.1px;width:160.6px;height:12.7px;background:#f3f3f3"></div>
<div class="a" style="left:333.2px;top:50.1px;width:35.1px;height:12.7px;background:#f3f3f3"></div>
<div class="a" style="left:369.5px;top:50.1px;width:37.5px;height:12.7px;background:#f3f3f3"></div>
<div class="a" style="left:408.2px;top:50.1px;width:47.8px;height:12.7px;background:#f3f3f3"></div>
<div class="a" style="left:457.2px;top:50.1px;width:53.6px;height:12.7px;background:#f3f3f3"></div>
<div class="a" style="left:512px;top:50.1px;width:24.6px;height:12.7px;background:#f3f3f3"></div>
<div class="a" style="left:537.8px;top:50.1px;width:70.2px;height:12.7px;background:#f3f3f3"></div>
<div class="c" style="left:2.2px;top:51.05px;line-height:12px;color:#3a3a3a;font-size:7.9px;transform:scaleX(0.962);transform-origin:0 50%;">005</div>
<div class="c" style="left:31.4px;top:51.05px;line-height:12px;color:#3a3a3a;font-size:7.9px;transform:scaleX(0.962);transform-origin:0 50%;">2</div>
<div class="c" style="left:178.2px;top:50.57px;line-height:12px;color:#3a3a3a;font-size:8.5px;transform:scaleX(0.818);transform-origin:0 50%;width:190px">DEPOSE ET EVACUATION DE PANNEAUX</div>
<div class="c" style="left:263.5px;width:100px;text-align:right;top:51.05px;line-height:12px;color:#3a3a3a;font-size:7.9px;transform:scaleX(0.962);transform-origin:100% 50%;">12,00</div>
<div class="c" style="left:369.2px;top:50.57px;line-height:12px;color:#3a3a3a;font-size:8.5px;transform:scaleX(0.824);transform-origin:0 50%;">UNITE</div>
<div class="c" style="left:351.2px;width:100px;text-align:right;top:51.05px;line-height:12px;color:#3a3a3a;font-size:7.9px;transform:scaleX(0.962);transform-origin:100% 50%;">35,00</div>
<div class="c" style="left:406.3px;width:100px;text-align:right;top:51.05px;line-height:12px;color:#3a3a3a;font-size:7.9px;transform:scaleX(0.962);transform-origin:100% 50%;">420,00</div>
<div class="c" style="left:512.3px;top:51.05px;line-height:12px;color:#3a3a3a;font-size:7.9px;transform:scaleX(0.962);transform-origin:0 50%;">20</div>
<div class="c" style="left:539.8px;top:51.05px;line-height:12px;color:#3a3a3a;font-size:7.9px;transform:scaleX(0.962);transform-origin:0 50%;">0</div>
<div class="c" style="left:2.2px;top:63.75px;line-height:12px;color:#3a3a3a;font-size:7.9px;transform:scaleX(0.962);transform-origin:0 50%;">006</div>
<div class="c" style="left:31.4px;top:63.75px;line-height:12px;color:#3a3a3a;font-size:7.9px;transform:scaleX(0.962);transform-origin:0 50%;">3</div>
<div class="c" style="left:178.2px;top:63.27px;line-height:12px;color:#3a3a3a;font-size:8.5px;transform:scaleX(0.818);transform-origin:0 50%;width:190px">DEPOSE DE POTELETS OU POUBELLES</div>
<div class="c" style="left:263.5px;width:100px;text-align:right;top:63.75px;line-height:12px;color:#3a3a3a;font-size:7.9px;transform:scaleX(0.962);transform-origin:100% 50%;">28,00</div>
<div class="c" style="left:369.2px;top:63.27px;line-height:12px;color:#3a3a3a;font-size:8.5px;transform:scaleX(0.824);transform-origin:0 50%;">UNITE</div>
<div class="c" style="left:351.2px;width:100px;text-align:right;top:63.75px;line-height:12px;color:#3a3a3a;font-size:7.9px;transform:scaleX(0.962);transform-origin:100% 50%;">35,00</div>
<div class="c" style="left:406.3px;width:100px;text-align:right;top:63.75px;line-height:12px;color:#3a3a3a;font-size:7.9px;transform:scaleX(0.962);transform-origin:100% 50%;">980,00</div>
<div class="c" style="left:512.3px;top:63.75px;line-height:12px;color:#3a3a3a;font-size:7.9px;transform:scaleX(0.962);transform-origin:0 50%;">20</div>
<div class="c" style="left:539.8px;top:63.75px;line-height:12px;color:#3a3a3a;font-size:7.9px;transform:scaleX(0.962);transform-origin:0 50%;">0</div>
<div class="a" style="left:1px;top:75.5px;width:27.3px;height:12.7px;background:#f3f3f3"></div>
<div class="a" style="left:29.8px;top:75.5px;width:68.8px;height:12.7px;background:#f3f3f3"></div>
<div class="a" style="left:100px;top:75.5px;width:70.2px;height:12.7px;background:#f3f3f3"></div>
<div class="a" style="left:171.4px;top:75.5px;width:160.6px;height:12.7px;background:#f3f3f3"></div>
<div class="a" style="left:333.2px;top:75.5px;width:35.1px;height:12.7px;background:#f3f3f3"></div>
<div class="a" style="left:369.5px;top:75.5px;width:37.5px;height:12.7px;background:#f3f3f3"></div>
<div class="a" style="left:408.2px;top:75.5px;width:47.8px;height:12.7px;background:#f3f3f3"></div>
<div class="a" style="left:457.2px;top:75.5px;width:53.6px;height:12.7px;background:#f3f3f3"></div>
<div class="a" style="left:512px;top:75.5px;width:24.6px;height:12.7px;background:#f3f3f3"></div>
<div class="a" style="left:537.8px;top:75.5px;width:70.2px;height:12.7px;background:#f3f3f3"></div>
<div class="c" style="left:2.2px;top:76.45px;line-height:12px;color:#3a3a3a;font-size:7.9px;transform:scaleX(0.962);transform-origin:0 50%;">007</div>
<div class="c" style="left:31.4px;top:76.45px;line-height:12px;color:#3a3a3a;font-size:7.9px;transform:scaleX(0.962);transform-origin:0 50%;">4</div>
<div class="c" style="left:178.2px;top:75.97px;line-height:12px;color:#3a3a3a;font-size:8.5px;transform:scaleX(0.818);transform-origin:0 50%;width:190px">DEPOSE DE MOBILIER BETON</div>
<div class="c" style="left:263.5px;width:100px;text-align:right;top:76.45px;line-height:12px;color:#3a3a3a;font-size:7.9px;transform:scaleX(0.962);transform-origin:100% 50%;">5,00</div>
<div class="c" style="left:369.2px;top:75.97px;line-height:12px;color:#3a3a3a;font-size:8.5px;transform:scaleX(0.824);transform-origin:0 50%;">UNITE</div>
<div class="c" style="left:351.2px;width:100px;text-align:right;top:76.45px;line-height:12px;color:#3a3a3a;font-size:7.9px;transform:scaleX(0.962);transform-origin:100% 50%;">53,00</div>
<div class="c" style="left:406.3px;width:100px;text-align:right;top:76.45px;line-height:12px;color:#3a3a3a;font-size:7.9px;transform:scaleX(0.962);transform-origin:100% 50%;">265,00</div>
<div class="c" style="left:512.3px;top:76.45px;line-height:12px;color:#3a3a3a;font-size:7.9px;transform:scaleX(0.962);transform-origin:0 50%;">20</div>
<div class="c" style="left:539.8px;top:76.45px;line-height:12px;color:#3a3a3a;font-size:7.9px;transform:scaleX(0.962);transform-origin:0 50%;">0</div>
<div class="c" style="left:2.2px;top:89.15px;line-height:12px;color:#3a3a3a;font-size:7.9px;transform:scaleX(0.962);transform-origin:0 50%;">008</div>
<div class="c" style="left:31.4px;top:89.15px;line-height:12px;color:#3a3a3a;font-size:7.9px;transform:scaleX(0.962);transform-origin:0 50%;">5</div>
<div class="c" style="left:178.2px;top:88.67px;line-height:12px;color:#3a3a3a;font-size:8.5px;transform:scaleX(0.818);transform-origin:0 50%;width:190px">DECOUPAGE DES REVETEMENTS</div>
<div class="c" style="left:263.5px;width:100px;text-align:right;top:89.15px;line-height:12px;color:#3a3a3a;font-size:7.9px;transform:scaleX(0.962);transform-origin:100% 50%;">40,00</div>
<div class="c" style="left:369.2px;top:88.67px;line-height:12px;color:#3a3a3a;font-size:8.5px;transform:scaleX(0.824);transform-origin:0 50%;">UNITE</div>
<div class="c" style="left:351.2px;width:100px;text-align:right;top:89.15px;line-height:12px;color:#3a3a3a;font-size:7.9px;transform:scaleX(0.962);transform-origin:100% 50%;">3,90</div>
<div class="c" style="left:406.3px;width:100px;text-align:right;top:89.15px;line-height:12px;color:#3a3a3a;font-size:7.9px;transform:scaleX(0.962);transform-origin:100% 50%;">156,00</div>
<div class="c" style="left:512.3px;top:89.15px;line-height:12px;color:#3a3a3a;font-size:7.9px;transform:scaleX(0.962);transform-origin:0 50%;">20</div>
<div class="c" style="left:539.8px;top:89.15px;line-height:12px;color:#3a3a3a;font-size:7.9px;transform:scaleX(0.962);transform-origin:0 50%;">0</div>
<div class="a" style="left:1px;top:100.9px;width:27.3px;height:12.7px;background:#f3f3f3"></div>
<div class="a" style="left:29.8px;top:100.9px;width:68.8px;height:12.7px;background:#f3f3f3"></div>
<div class="a" style="left:100px;top:100.9px;width:70.2px;height:12.7px;background:#f3f3f3"></div>
<div class="a" style="left:171.4px;top:100.9px;width:160.6px;height:12.7px;background:#f3f3f3"></div>
<div class="a" style="left:333.2px;top:100.9px;width:35.1px;height:12.7px;background:#f3f3f3"></div>
<div class="a" style="left:369.5px;top:100.9px;width:37.5px;height:12.7px;background:#f3f3f3"></div>
<div class="a" style="left:408.2px;top:100.9px;width:47.8px;height:12.7px;background:#f3f3f3"></div>
<div class="a" style="left:457.2px;top:100.9px;width:53.6px;height:12.7px;background:#f3f3f3"></div>
<div class="a" style="left:512px;top:100.9px;width:24.6px;height:12.7px;background:#f3f3f3"></div>
<div class="a" style="left:537.8px;top:100.9px;width:70.2px;height:12.7px;background:#f3f3f3"></div>
<div class="c" style="left:2.2px;top:101.85px;line-height:12px;color:#3a3a3a;font-size:7.9px;transform:scaleX(0.962);transform-origin:0 50%;">009</div>
<div class="c" style="left:31.4px;top:101.85px;line-height:12px;color:#3a3a3a;font-size:7.9px;transform:scaleX(0.962);transform-origin:0 50%;">6</div>
<div class="c" style="left:178.2px;top:101.37px;line-height:12px;color:#3a3a3a;font-size:8.5px;transform:scaleX(0.818);transform-origin:0 50%;width:190px">DEPOSE ET EVACUATION DE BORDURES OU</div>
<div class="c" style="left:263.5px;width:100px;text-align:right;top:101.85px;line-height:12px;color:#3a3a3a;font-size:7.9px;transform:scaleX(0.962);transform-origin:100% 50%;">1150,00</div>
<div class="c" style="left:369.2px;top:101.37px;line-height:12px;color:#3a3a3a;font-size:8.5px;transform:scaleX(0.824);transform-origin:0 50%;">UNITE</div>
<div class="c" style="left:351.2px;width:100px;text-align:right;top:101.85px;line-height:12px;color:#3a3a3a;font-size:7.9px;transform:scaleX(0.962);transform-origin:100% 50%;">5,20</div>
<div class="c" style="left:406.3px;width:100px;text-align:right;top:101.85px;line-height:12px;color:#3a3a3a;font-size:7.9px;transform:scaleX(0.962);transform-origin:100% 50%;">5 980,00</div>
<div class="c" style="left:512.3px;top:101.85px;line-height:12px;color:#3a3a3a;font-size:7.9px;transform:scaleX(0.962);transform-origin:0 50%;">20</div>
<div class="c" style="left:539.8px;top:101.85px;line-height:12px;color:#3a3a3a;font-size:7.9px;transform:scaleX(0.962);transform-origin:0 50%;">0</div>
<div class="c" style="left:2.2px;top:114.55px;line-height:12px;color:#3a3a3a;font-size:7.9px;transform:scaleX(0.962);transform-origin:0 50%;">010</div>
<div class="c" style="left:31.4px;top:114.55px;line-height:12px;color:#3a3a3a;font-size:7.9px;transform:scaleX(0.962);transform-origin:0 50%;">7</div>
<div class="c" style="left:178.2px;top:114.07px;line-height:12px;color:#3a3a3a;font-size:8.5px;transform:scaleX(0.818);transform-origin:0 50%;width:190px">DEMOLITION D'OUVRAGE DIVERS EN BETON</div>
<div class="c" style="left:263.5px;width:100px;text-align:right;top:114.55px;line-height:12px;color:#3a3a3a;font-size:7.9px;transform:scaleX(0.962);transform-origin:100% 50%;">25,00</div>
<div class="c" style="left:369.2px;top:114.07px;line-height:12px;color:#3a3a3a;font-size:8.5px;transform:scaleX(0.824);transform-origin:0 50%;">UNITE</div>
<div class="c" style="left:351.2px;width:100px;text-align:right;top:114.55px;line-height:12px;color:#3a3a3a;font-size:7.9px;transform:scaleX(0.962);transform-origin:100% 50%;">77,85</div>
<div class="c" style="left:406.3px;width:100px;text-align:right;top:114.55px;line-height:12px;color:#3a3a3a;font-size:7.9px;transform:scaleX(0.962);transform-origin:100% 50%;">1 946,25</div>
<div class="c" style="left:512.3px;top:114.55px;line-height:12px;color:#3a3a3a;font-size:7.9px;transform:scaleX(0.962);transform-origin:0 50%;">20</div>
<div class="c" style="left:539.8px;top:114.55px;line-height:12px;color:#3a3a3a;font-size:7.9px;transform:scaleX(0.962);transform-origin:0 50%;">0</div>
<div class="a" style="left:1px;top:126.3px;width:27.3px;height:12.7px;background:#f3f3f3"></div>
<div class="a" style="left:29.8px;top:126.3px;width:68.8px;height:12.7px;background:#f3f3f3"></div>
<div class="a" style="left:100px;top:126.3px;width:70.2px;height:12.7px;background:#f3f3f3"></div>
<div class="a" style="left:171.4px;top:126.3px;width:160.6px;height:12.7px;background:#f3f3f3"></div>
<div class="a" style="left:333.2px;top:126.3px;width:35.1px;height:12.7px;background:#f3f3f3"></div>
<div class="a" style="left:369.5px;top:126.3px;width:37.5px;height:12.7px;background:#f3f3f3"></div>
<div class="a" style="left:408.2px;top:126.3px;width:47.8px;height:12.7px;background:#f3f3f3"></div>
<div class="a" style="left:457.2px;top:126.3px;width:53.6px;height:12.7px;background:#f3f3f3"></div>
<div class="a" style="left:512px;top:126.3px;width:24.6px;height:12.7px;background:#f3f3f3"></div>
<div class="a" style="left:537.8px;top:126.3px;width:70.2px;height:12.7px;background:#f3f3f3"></div>
<div class="c" style="left:2.2px;top:127.25px;line-height:12px;color:#3a3a3a;font-size:7.9px;transform:scaleX(0.962);transform-origin:0 50%;">011</div>
<div class="c" style="left:31.4px;top:127.25px;line-height:12px;color:#3a3a3a;font-size:7.9px;transform:scaleX(0.962);transform-origin:0 50%;">8</div>
<div class="c" style="left:178.2px;top:126.77px;line-height:12px;color:#3a3a3a;font-size:8.5px;transform:scaleX(0.818);transform-origin:0 50%;width:190px">DEMOLITION DE GRILLE EXISTANTE OU AVAL</div>
<div class="c" style="left:263.5px;width:100px;text-align:right;top:127.25px;line-height:12px;color:#3a3a3a;font-size:7.9px;transform:scaleX(0.962);transform-origin:100% 50%;">17,00</div>
<div class="c" style="left:369.2px;top:126.77px;line-height:12px;color:#3a3a3a;font-size:8.5px;transform:scaleX(0.824);transform-origin:0 50%;">UNITE</div>
<div class="c" style="left:351.2px;width:100px;text-align:right;top:127.25px;line-height:12px;color:#3a3a3a;font-size:7.9px;transform:scaleX(0.962);transform-origin:100% 50%;">77,85</div>
<div class="c" style="left:406.3px;width:100px;text-align:right;top:127.25px;line-height:12px;color:#3a3a3a;font-size:7.9px;transform:scaleX(0.962);transform-origin:100% 50%;">1 323,45</div>
<div class="c" style="left:512.3px;top:127.25px;line-height:12px;color:#3a3a3a;font-size:7.9px;transform:scaleX(0.962);transform-origin:0 50%;">20</div>
<div class="c" style="left:539.8px;top:127.25px;line-height:12px;color:#3a3a3a;font-size:7.9px;transform:scaleX(0.962);transform-origin:0 50%;">0</div>
<div class="c" style="left:2.2px;top:139.95px;line-height:12px;color:#3a3a3a;font-size:7.9px;transform:scaleX(0.962);transform-origin:0 50%;">012</div>
<div class="c" style="left:31.4px;top:139.95px;line-height:12px;color:#3a3a3a;font-size:7.9px;transform:scaleX(0.962);transform-origin:0 50%;">9</div>
<div class="c" style="left:178.2px;top:139.47px;line-height:12px;color:#3a3a3a;font-size:8.5px;transform:scaleX(0.818);transform-origin:0 50%;width:190px">DEPOSE DE PAVES OU DALLES EN PIERRE OU</div>
<div class="c" style="left:263.5px;width:100px;text-align:right;top:139.95px;line-height:12px;color:#3a3a3a;font-size:7.9px;transform:scaleX(0.962);transform-origin:100% 50%;">490,00</div>
<div class="c" style="left:369.2px;top:139.47px;line-height:12px;color:#3a3a3a;font-size:8.5px;transform:scaleX(0.824);transform-origin:0 50%;">UNITE</div>
<div class="c" style="left:351.2px;width:100px;text-align:right;top:139.95px;line-height:12px;color:#3a3a3a;font-size:7.9px;transform:scaleX(0.962);transform-origin:100% 50%;">10,25</div>
<div class="c" style="left:406.3px;width:100px;text-align:right;top:139.95px;line-height:12px;color:#3a3a3a;font-size:7.9px;transform:scaleX(0.962);transform-origin:100% 50%;">5 022,50</div>
<div class="c" style="left:512.3px;top:139.95px;line-height:12px;color:#3a3a3a;font-size:7.9px;transform:scaleX(0.962);transform-origin:0 50%;">20</div>
<div class="c" style="left:539.8px;top:139.95px;line-height:12px;color:#3a3a3a;font-size:7.9px;transform:scaleX(0.962);transform-origin:0 50%;">0</div>
<div class="a" style="left:1px;top:151.7px;width:27.3px;height:12.7px;background:#f3f3f3"></div>
<div class="a" style="left:29.8px;top:151.7px;width:68.8px;height:12.7px;background:#f3f3f3"></div>
<div class="a" style="left:100px;top:151.7px;width:70.2px;height:12.7px;background:#f3f3f3"></div>
<div class="a" style="left:171.4px;top:151.7px;width:160.6px;height:12.7px;background:#f3f3f3"></div>
<div class="a" style="left:333.2px;top:151.7px;width:35.1px;height:12.7px;background:#f3f3f3"></div>
<div class="a" style="left:369.5px;top:151.7px;width:37.5px;height:12.7px;background:#f3f3f3"></div>
<div class="a" style="left:408.2px;top:151.7px;width:47.8px;height:12.7px;background:#f3f3f3"></div>
<div class="a" style="left:457.2px;top:151.7px;width:53.6px;height:12.7px;background:#f3f3f3"></div>
<div class="a" style="left:512px;top:151.7px;width:24.6px;height:12.7px;background:#f3f3f3"></div>
<div class="a" style="left:537.8px;top:151.7px;width:70.2px;height:12.7px;background:#f3f3f3"></div>
<div class="c" style="left:2.2px;top:152.65px;line-height:12px;color:#3a3a3a;font-size:7.9px;transform:scaleX(0.962);transform-origin:0 50%;">013</div>
<div class="c" style="left:31.4px;top:152.65px;line-height:12px;color:#3a3a3a;font-size:7.9px;transform:scaleX(0.962);transform-origin:0 50%;">10.a</div>
<div class="c" style="left:178.2px;top:152.33px;line-height:12px;color:#3a3a3a;font-size:8.3px;transform:scaleX(0.91);transform-origin:0 50%;width:190px">Sur trottoir</div>
<div class="c" style="left:263.5px;width:100px;text-align:right;top:152.65px;line-height:12px;color:#3a3a3a;font-size:7.9px;transform:scaleX(0.962);transform-origin:100% 50%;">1665,00</div>
<div class="c" style="left:369.2px;top:152.17px;line-height:12px;color:#3a3a3a;font-size:8.5px;transform:scaleX(0.824);transform-origin:0 50%;">UNITE</div>
<div class="c" style="left:351.2px;width:100px;text-align:right;top:152.65px;line-height:12px;color:#3a3a3a;font-size:7.9px;transform:scaleX(0.962);transform-origin:100% 50%;">4,30</div>
<div class="c" style="left:406.3px;width:100px;text-align:right;top:152.65px;line-height:12px;color:#3a3a3a;font-size:7.9px;transform:scaleX(0.962);transform-origin:100% 50%;">7 159,50</div>
<div class="c" style="left:512.3px;top:152.65px;line-height:12px;color:#3a3a3a;font-size:7.9px;transform:scaleX(0.962);transform-origin:0 50%;">20</div>
<div class="c" style="left:539.8px;top:152.65px;line-height:12px;color:#3a3a3a;font-size:7.9px;transform:scaleX(0.962);transform-origin:0 50%;">0</div>
<div class="c" style="left:2.2px;top:165.35px;line-height:12px;color:#3a3a3a;font-size:7.9px;transform:scaleX(0.962);transform-origin:0 50%;">014</div>
<div class="c" style="left:31.4px;top:165.35px;line-height:12px;color:#3a3a3a;font-size:7.9px;transform:scaleX(0.962);transform-origin:0 50%;">10.b</div>
<div class="c" style="left:178.2px;top:165.03px;line-height:12px;color:#3a3a3a;font-size:8.3px;transform:scaleX(0.91);transform-origin:0 50%;width:190px">Sur chaussée</div>
<div class="c" style="left:263.5px;width:100px;text-align:right;top:165.35px;line-height:12px;color:#3a3a3a;font-size:7.9px;transform:scaleX(0.962);transform-origin:100% 50%;">1830,00</div>
<div class="c" style="left:369.2px;top:164.87px;line-height:12px;color:#3a3a3a;font-size:8.5px;transform:scaleX(0.824);transform-origin:0 50%;">UNITE</div>
<div class="c" style="left:351.2px;width:100px;text-align:right;top:165.35px;line-height:12px;color:#3a3a3a;font-size:7.9px;transform:scaleX(0.962);transform-origin:100% 50%;">3,90</div>
<div class="c" style="left:406.3px;width:100px;text-align:right;top:165.35px;line-height:12px;color:#3a3a3a;font-size:7.9px;transform:scaleX(0.962);transform-origin:100% 50%;">7 137,00</div>
<div class="c" style="left:512.3px;top:165.35px;line-height:12px;color:#3a3a3a;font-size:7.9px;transform:scaleX(0.962);transform-origin:0 50%;">20</div>
<div class="c" style="left:539.8px;top:165.35px;line-height:12px;color:#3a3a3a;font-size:7.9px;transform:scaleX(0.962);transform-origin:0 50%;">0</div>
<div class="a" style="left:1px;top:177.1px;width:27.3px;height:12.7px;background:#f3f3f3"></div>
<div class="a" style="left:29.8px;top:177.1px;width:68.8px;height:12.7px;background:#f3f3f3"></div>
<div class="a" style="left:100px;top:177.1px;width:70.2px;height:12.7px;background:#f3f3f3"></div>
<div class="a" style="left:171.4px;top:177.1px;width:160.6px;height:12.7px;background:#f3f3f3"></div>
<div class="a" style="left:333.2px;top:177.1px;width:35.1px;height:12.7px;background:#f3f3f3"></div>
<div class="a" style="left:369.5px;top:177.1px;width:37.5px;height:12.7px;background:#f3f3f3"></div>
<div class="a" style="left:408.2px;top:177.1px;width:47.8px;height:12.7px;background:#f3f3f3"></div>
<div class="a" style="left:457.2px;top:177.1px;width:53.6px;height:12.7px;background:#f3f3f3"></div>
<div class="a" style="left:512px;top:177.1px;width:24.6px;height:12.7px;background:#f3f3f3"></div>
<div class="a" style="left:537.8px;top:177.1px;width:70.2px;height:12.7px;background:#f3f3f3"></div>
<div class="c" style="left:2.2px;top:178.05px;line-height:12px;color:#3a3a3a;font-size:7.9px;transform:scaleX(0.962);transform-origin:0 50%;">015</div>
<div class="c" style="left:31.4px;top:178.05px;line-height:12px;color:#3a3a3a;font-size:7.9px;transform:scaleX(0.962);transform-origin:0 50%;">11</div>
<div class="c" style="left:178.2px;top:177.57px;line-height:12px;color:#3a3a3a;font-size:8.5px;transform:scaleX(0.818);transform-origin:0 50%;width:190px">RABOTTAGE DE CHAUSSEE</div>
<div class="c" style="left:263.5px;width:100px;text-align:right;top:178.05px;line-height:12px;color:#3a3a3a;font-size:7.9px;transform:scaleX(0.962);transform-origin:100% 50%;">1610,00</div>
<div class="c" style="left:369.2px;top:177.57px;line-height:12px;color:#3a3a3a;font-size:8.5px;transform:scaleX(0.824);transform-origin:0 50%;">UNITE</div>
<div class="c" style="left:351.2px;width:100px;text-align:right;top:178.05px;line-height:12px;color:#3a3a3a;font-size:7.9px;transform:scaleX(0.962);transform-origin:100% 50%;">3,70</div>
<div class="c" style="left:406.3px;width:100px;text-align:right;top:178.05px;line-height:12px;color:#3a3a3a;font-size:7.9px;transform:scaleX(0.962);transform-origin:100% 50%;">5 957,00</div>
<div class="c" style="left:512.3px;top:178.05px;line-height:12px;color:#3a3a3a;font-size:7.9px;transform:scaleX(0.962);transform-origin:0 50%;">20</div>
<div class="c" style="left:539.8px;top:178.05px;line-height:12px;color:#3a3a3a;font-size:7.9px;transform:scaleX(0.962);transform-origin:0 50%;">0</div>
</div>
<div class="a" style="left:143px;top:516.2px;width:27.3px;height:13.3px;background:#f3f3f3"></div>
<div class="a" style="left:171.8px;top:516.2px;width:68.8px;height:13.3px;background:#f3f3f3"></div>
<div class="a" style="left:242px;top:516.2px;width:70.2px;height:13.3px;background:#f3f3f3"></div>
<div class="a" style="left:313.4px;top:516.2px;width:160.6px;height:13.3px;background:#f3f3f3"></div>
<div class="a" style="left:475.2px;top:516.2px;width:35.1px;height:13.3px;background:#f3f3f3"></div>
<div class="a" style="left:511.5px;top:516.2px;width:37.5px;height:13.3px;background:#f3f3f3"></div>
<div class="a" style="left:550.2px;top:516.2px;width:47.8px;height:13.3px;background:#f3f3f3"></div>
<div class="a" style="left:599.2px;top:516.2px;width:53.6px;height:13.3px;background:#f3f3f3"></div>
<div class="a" style="left:654px;top:516.2px;width:24.6px;height:13.3px;background:#f3f3f3"></div>
<div class="a" style="left:679.8px;top:516.2px;width:70.2px;height:13.3px;background:#f3f3f3"></div>
<div class="a" style="left:560px;top:518.2px;font-size:8.6px;font-weight:bold;color:#2c2c2c;line-height:10px;width:88.5px;text-align:right">538 430,10</div>
<div class="a" style="left:751px;top:332px;width:10.6px;height:197.6px;background:#ebebeb"></div>
<div class="a" style="left:751px;top:316.5px;width:10.6px;height:15.5px;background:#34435d"></div>
<svg class="a" style="left:753.3px;top:320.5px" width="6" height="8" viewBox="0 0 6 8"><path d="M0.8 0.8L3 3L5.2 0.8M0.8 4.4L3 6.6L5.2 4.4" stroke="#f0f0f0" stroke-width="1.1" fill="none"/></svg>
<div class="a" style="left:751px;top:334px;width:10.6px;height:8.7px;background:#34435d;border-radius:1px"></div>
<svg class="a" style="left:754.3px;top:336.8px" width="4" height="3" viewBox="0 0 4 3"><path d="M0.3 2.5L2 0.7L3.7 2.5" stroke="#cfd4de" stroke-width="0.7" fill="none"/></svg>
<div class="a" style="left:751px;top:345.6px;width:10.6px;height:18.5px;background:#34435d;border-radius:1px"></div>
<div class="a" style="left:754px;top:352px;width:4.4px;height:6.3px;background:#7d889d"></div>
<div class="a" style="left:754px;top:352.4px;width:4.4px;height:0.7px;background:#b4bccb"></div>
<div class="a" style="left:754px;top:353.9px;width:4.4px;height:0.7px;background:#b4bccb"></div>
<div class="a" style="left:754px;top:355.4px;width:4.4px;height:0.7px;background:#b4bccb"></div>
<div class="a" style="left:754px;top:356.9px;width:4.4px;height:0.7px;background:#b4bccb"></div>
<div class="a" style="left:751px;top:505.7px;width:10.6px;height:9.8px;background:#34435d;border-radius:1px"></div>
<svg class="a" style="left:754.3px;top:509.5px" width="4" height="3" viewBox="0 0 4 3"><path d="M0.3 0.5L2 2.3L3.7 0.5" stroke="#cfd4de" stroke-width="0.7" fill="none"/></svg>
<svg class="a" style="left:761px;top:529px" width="8" height="8" viewBox="0 0 8 8"><path d="M8 0V8H0Z" fill="#9a9a9a"/></svg>
<div class="a" style="left:771px;top:0px;width:1px;height:541px;background:#5b9bd5"></div>
<div class="a" style="left:0px;top:540px;width:772px;height:1px;background:#5b9bd5"></div>
<div class="a" style="left:771px;top:0px;width:4px;height:4px;background:#1f6bb8"></div></div><div class="a" style="left:772px;top:0;width:3px;height:4px;background:#1f6bb8"></div>
<div class="a" style="left:772px;top:4px;width:3px;height:11px;background:#cfcfcf"></div>
<div class="a" style="left:772px;top:15px;width:3px;height:526px;background:#e9e9e9"></div>
<div class="a" style="left:772px;top:77px;width:3px;height:2px;background:#c4c4c4"></div>
<div class="a" style="left:772px;top:108px;width:3px;height:25px;background:#34435d"></div>
<div class="a" style="left:772px;top:133.5px;width:3px;height:14.5px;background:#a9bf34"></div></body></html>
